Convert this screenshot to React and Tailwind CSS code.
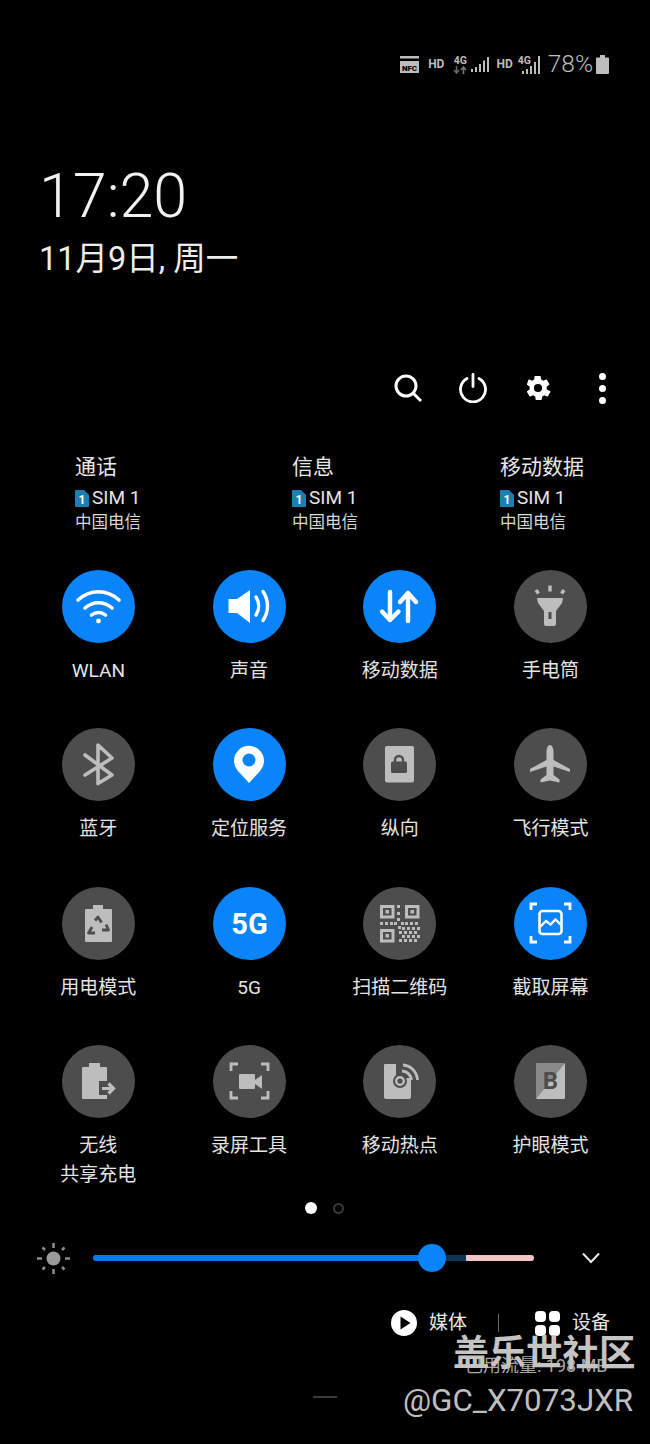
import React from "react"

const ON = "#0a84fb"
const OFF = "#4d4d4d"
const ICON = "#bdbdbd"

function SimRow({ title, width }) {
  return (
    <div className={width}>
      <div className="text-[21px] leading-[24px] text-[#e8e8e8]">{title}</div>
      <div className="flex items-center mt-[7px] h-[24px]">
        <svg width="14" height="17" viewBox="0 0 14 17">
          <path d="M1 0h8l5 5v11a1 1 0 0 1-1 1H1a1 1 0 0 1-1-1V1a1 1 0 0 1 1-1z" fill="#1b7fb4" />
          <text x="7" y="13.500" textAnchor="middle" fontSize="12" fontWeight="700" fill="#fff" fontFamily="Roboto">1</text>
        </svg>
        <span className="ml-[3px] text-[19px] text-[#e4e4e4]">SIM 1</span>
      </div>
      <div className="text-[16.500px] leading-[22px] mt-[2px] text-[#d8d8d8]">中国电信</div>
    </div>
  )
}

function Wifi() {
  return (
    <g fill="none" stroke="#fff" strokeWidth="3.600" strokeLinecap="round">
      <path d="M16 30c12-11 29-11 41 0" />
      <path d="M23 38c8-7 19-7 27 0" />
      <path d="M29.500 45c4-3.400 10-3.400 14 0" />
      <circle cx="36.500" cy="51" r="2.400" fill="#fff" stroke="none" />
    </g>
  )
}

function Sound() {
  return (
    <g>
      <path d="M15.500 29H24l13-9v33l-13-10h-8.500z" fill="#fff" />
      <g fill="none" stroke="#fff" strokeWidth="3.400" strokeLinecap="round">
        <path d="M43 27c3.500 5.500 3.500 12.500 0 18" />
        <path d="M50 21.500c6 9 6 20 0 29" />
      </g>
    </g>
  )
}

function Data() {
  return (
    <g fill="none" stroke="#fff" strokeWidth="4.400" strokeLinecap="round" strokeLinejoin="round">
      <path d="M27 22v28M19 41.500l8 8.500 8.500-8.500" />
      <path d="M45 23v28M37 32l8-9 8 9" />
    </g>
  )
}

function Torch() {
  return (
    <g>
      <path d="M23 28h26l-1 5-6 8v13a2 2 0 0 1-2 2h-8a2 2 0 0 1-2-2V41l-6-8z" fill={ICON} />
      <rect x="34.500" y="42" width="3" height="7" fill={OFF} />
      <g stroke={ICON} strokeWidth="3.500">
        <path d="M36 15.500v6" />
        <path d="M22 20l2.500 3.500" />
        <path d="M50 20l-2.500 3.500" />
      </g>
    </g>
  )
}

function Bluetooth() {
  return <path d="M23 27l27 20-14 8.500V17l14 13-27 17" fill="none" stroke={ICON} strokeWidth="3.600" strokeLinejoin="round" strokeLinecap="round" />
}

function Pin() {
  return (
    <g>
      <path d="M36 55L24.500 42.500a15 15 0 1 1 23 0z" fill="#fff" />
      <circle cx="36" cy="32" r="6.500" fill={ON} />
    </g>
  )
}

function Portrait() {
  return (
    <g>
      <rect x="22" y="18" width="29" height="36.500" rx="2" fill={ICON} />
      <rect x="28" y="33.500" width="16" height="11.500" rx="1.500" fill={OFF} />
      <path d="M32 34v-2a4 4 0 0 1 8 0v2" fill="none" stroke={OFF} strokeWidth="2.400" />
    </g>
  )
}

function Plane() {
  return <path d="M36 17c2 0 3.500 3 3.500 7v8L56 41v3l-16.500-5.500V47l6 4.500v3L36 52.500l-9.500 2v-3l6-4.500v-8.500L16 44v-3l16.500-9v-8c0-4 1.500-7 3.500-7z" fill={ICON} />
}

function PowerMode() {
  return (
    <g>
      <path d="M31 18h10v4h8a1 1 0 0 1 1 1v31a1 1 0 0 1-1 1H24a1 1 0 0 1-1-1V23a1 1 0 0 1 1-1h7z" fill={ICON} />
      <g fill="none" stroke={OFF} strokeWidth="2.800" strokeLinejoin="round">
        <path d="M33 33.500l3-3.500 3.500 5.500" />
        <path d="M44 37.500l2.500 5.500H40" />
        <path d="M33 46h-6.500l3.500-6" />
      </g>
    </g>
  )
}

function Finder({ x, y }) {
  return (
    <g>
      <rect x={x + 1.500} y={y + 1.500} width="11.500" height="10.500" fill="none" stroke={ICON} strokeWidth="3" />
      <rect x={x + 5.500} y={y + 5} width="3.500" height="3.500" fill={ICON} />
    </g>
  )
}

const QR_DOTS = [
  [34, 18], [34, 25], [34, 31], [31, 35], [38, 35], [17, 35], [22, 35], [27, 35],
  [35, 39], [42, 35], [47, 35], [52, 35], [39, 40], [44, 40], [49, 40], [54, 40],
  [36, 44], [41, 44], [46, 44], [51, 44], [39, 48], [44, 48], [49, 48], [54, 48],
  [36, 52], [41, 52], [46, 52], [51, 52],
]

function Qr() {
  return (
    <g>
      <Finder x={17} y={18} />
      <Finder x={42} y={18} />
      <Finder x={17} y={42} />
      {QR_DOTS.map(([x, y]) => (
        <rect key={`${x}-${y}`} x={x} y={y} width="3" height="3" fill={ICON} />
      ))}
    </g>
  )
}

function Corners({ l, t, r, b, color, size }) {
  return (
    <path
      d={`M${l} ${t + size}V${t}H${l + size} M${r - size} ${t}H${r}V${t + size} M${l} ${b - size}V${b}H${l + size} M${r - size} ${b}H${r}V${b - size}`}
      fill="none"
      stroke={color}
      strokeWidth="2.800"
    />
  )
}

function Capture() {
  return (
    <g>
      <Corners l={17} t={17} r={56} b={55} color="#fff" size={6} />
      <rect x="25.500" y="24" width="22" height="23" rx="3" fill="none" stroke="#fff" strokeWidth="2.600" />
      <path d="M26 40l6-6 4.500 3.500 5-5 5 5" fill="none" stroke="#fff" strokeWidth="2.400" />
    </g>
  )
}

function Share() {
  return (
    <g>
      <path d="M27 18h11v4h6a1 1 0 0 1 1 1v31H21a1 1 0 0 1-1-1V23a1 1 0 0 1 1-1h6z" fill={ICON} />
      <path d="M37 36h9v14h-9z" fill={OFF} />
      <path d="M40 43.500h9M46.500 38.500l5 5-5 5" fill="none" stroke={ICON} strokeWidth="3.200" />
    </g>
  )
}

function Record() {
  return (
    <g>
      <Corners l={18} t={19} r={55} b={53} color={ICON} size={7} />
      <rect x="26" y="29" width="16" height="15" rx="1" fill={ICON} />
      <path d="M42 35l7-5v14l-7-5z" fill={ICON} />
    </g>
  )
}

function Hotspot() {
  return (
    <g>
      <path d="M22 19h11v14h15v19a2 2 0 0 1-2 2H23a2 2 0 0 1-2-2V20a1 1 0 0 1 1-1z" fill={ICON} />
      <circle cx="37" cy="36" r="7" fill={OFF} />
      <circle cx="37" cy="36" r="3.800" fill="none" stroke={ICON} strokeWidth="2.400" />
      <g fill="none" stroke={ICON} strokeWidth="2.800">
        <path d="M39 26c5 0 9 4 9.500 9" />
        <path d="M40 20c8 .500 14 7 14.500 15" />
      </g>
    </g>
  )
}

function EyeMode() {
  return (
    <g>
      <rect x="22" y="18" width="29" height="36" rx="1.500" fill={ICON} />
      <path d="M22 54V19.500a1.500 1.500 0 0 1 1.500-1.500H51z" fill="#8a8a8a" />
      <text x="36.500" y="44" textAnchor="middle" fontSize="24" fontWeight="700" fill={OFF} fontFamily="Roboto">B</text>
    </g>
  )
}

function FiveG() {
  return <text x="36.500" y="47" textAnchor="middle" fontSize="29" fontWeight="700" fill="#fff" fontFamily="Roboto">5G</text>
}

const tiles = [
  { label: "WLAN", on: true, Icon: Wifi },
  { label: "声音", on: true, Icon: Sound },
  { label: "移动数据", on: true, Icon: Data },
  { label: "手电筒", Icon: Torch },
  { label: "蓝牙", Icon: Bluetooth },
  { label: "定位服务", on: true, Icon: Pin },
  { label: "纵向", Icon: Portrait },
  { label: "飞行模式", Icon: Plane },
  { label: "用电模式", Icon: PowerMode },
  { label: "5G", on: true, Icon: FiveG },
  { label: "扫描二维码", Icon: Qr },
  { label: "截取屏幕", on: true, Icon: Capture },
  { label: "无线", sub: "共享充电", Icon: Share },
  { label: "录屏工具", Icon: Record },
  { label: "移动热点", Icon: Hotspot },
  { label: "护眼模式", Icon: EyeMode },
]

function Tile({ label, sub, on, Icon }) {
  return (
    <div className="flex flex-col items-center h-[158.300px]">
      <div className={`w-[73px] h-[73px] rounded-full ${on ? "bg-[#0a84fb]" : "bg-[#4d4d4d]"}`}>
        <svg width="73" height="73" viewBox="0 0 73 73">
          <Icon />
        </svg>
      </div>
      <div className="mt-[16px] text-[19px] leading-[24px] text-[#e4e4e4] whitespace-nowrap">{label}</div>
      {sub && <div className="mt-[5px] text-[19px] leading-[24px] text-[#e4e4e4] whitespace-nowrap">{sub}</div>}
    </div>
  )
}

function StatusBar() {
  return (
    <div className="flex justify-end items-center h-[26px] mt-[51px] pr-[41px] text-[#bdbdbd]">
      <svg width="19" height="17" viewBox="0 0 19 17">
        <rect x="0" y="0" width="19" height="2.500" fill="#bdbdbd" />
        <rect x="0" y="5" width="19" height="12" fill="#bdbdbd" />
        <text x="9.500" y="14.500" textAnchor="middle" fontSize="8" fontWeight="900" fill="#000" fontFamily="Roboto">NFC</text>
      </svg>
      <span className="ml-[9px] text-[12px] font-bold">HD</span>
      <div className="ml-[9px] w-[14px] flex flex-col items-center">
        <span className="text-[10.500px] leading-[11px] font-bold">4G</span>
        <svg width="14" height="8" viewBox="0 0 14 8">
          <path d="M3.500 0v6M1 4l2.500 3L6 4" fill="none" stroke="#666" strokeWidth="1.600" />
          <path d="M10.500 8V2M8 4l2.500-3L13 4" fill="none" stroke="#777" strokeWidth="1.600" />
        </svg>
      </div>
      <svg className="ml-[4px]" width="19" height="17" viewBox="0 0 19 17">
        <path d="M1 13v3M5 11v5M9 8v8M13 4.500V16M17 1v15" stroke="#bdbdbd" strokeWidth="2" />
      </svg>
      <span className="ml-[6px] text-[12px] font-bold">HD</span>
      <div className="relative ml-[5px] w-[23px] h-[19px]">
        <span className="absolute left-0 top-0 text-[10.500px] leading-[11px] font-bold">4G</span>
        <svg className="absolute left-0 top-0" width="23" height="19" viewBox="0 0 23 19">
          <path d="M5 16v3M9 14v5M13 11v8M17 7v12M21 1v18" stroke="#bdbdbd" strokeWidth="2" />
        </svg>
      </div>
      <span className="ml-[7px] text-[24.500px] font-light leading-[26px]">78%</span>
      <svg className="ml-[3px]" width="13" height="19" viewBox="0 0 13 19">
        <path d="M4 0h5v2.500h3a1 1 0 0 1 1 1V18a1 1 0 0 1-1 1H1a1 1 0 0 1-1-1V3.500a1 1 0 0 1 1-1h3z" fill="#bdbdbd" />
      </svg>
    </div>
  )
}

function Toolbar() {
  return (
    <div className="flex justify-end pr-[15px] mt-[92px] h-[34px] text-white">
      <div className="w-[65px] flex justify-center items-center">
        <svg width="30" height="30" viewBox="0 0 30 30" fill="none" stroke="#fff" strokeWidth="3">
          <circle cx="13" cy="13" r="10" />
          <path d="M20 20l8 8" />
        </svg>
      </div>
      <div className="w-[65px] flex justify-center items-center">
        <svg width="30" height="30" viewBox="0 0 30 30" fill="none" stroke="#fff" strokeWidth="2.800" strokeLinecap="round">
          <path d="M15 1.500v12" />
          <path d="M9 5.500a12.500 12.500 0 1 0 12 0" />
        </svg>
      </div>
      <div className="w-[65px] flex justify-center items-center">
        <svg width="28" height="28" viewBox="0 0 24 24">
          <path
            fillRule="evenodd"
            fill="#fff"
            d="M19.400 13c.1-.3.100-.7.100-1s0-.7-.1-1l2.200-1.700c.2-.2.300-.4.100-.7l-2.100-3.600c-.1-.2-.4-.3-.6-.2l-2.600 1c-.5-.4-1.100-.7-1.700-1l-.4-2.700c0-.3-.2-.4-.5-.4h-4.200c-.3 0-.5.100-.5.400l-.4 2.700c-.6.300-1.200.6-1.700 1l-2.600-1c-.2-.1-.5 0-.6.200L2.600 8.600c-.2.300-.1.500.1.700L4.900 11c-.1.300-.1.700-.1 1s0 .7.100 1l-2.200 1.700c-.2.200-.3.400-.1.700l2.100 3.600c.1.200.4.300.6.200l2.600-1c.5.400 1.100.7 1.700 1l.4 2.700c0 .3.200.4.500.4h4.200c.3 0 .5-.1.500-.4l.4-2.700c.6-.3 1.200-.6 1.700-1l2.600 1c.2.100.5 0 .6-.2l2.100-3.600c.2-.3.100-.5-.1-.7zM12 15.500a3.500 3.500 0 1 1 0-7 3.500 3.500 0 0 1 0 7z"
          />
        </svg>
      </div>
      <div className="w-[65px] flex flex-col justify-center items-center gap-[5px]">
        <span className="w-[7px] h-[7px] rounded-full bg-white" />
        <span className="w-[7px] h-[7px] rounded-full bg-white" />
        <span className="w-[7px] h-[7px] rounded-full bg-white" />
      </div>
    </div>
  )
}

function Brightness() {
  return (
    <div className="flex items-center h-[30px] mt-[29px] pl-[36px]">
      <svg width="35" height="35" viewBox="0 0 35 35">
        <circle cx="17.500" cy="17.500" r="7" fill="#9a9a9a" />
        <g stroke="#8a8a8a" strokeWidth="2.600">
          <path d="M17.500 2v5M17.500 28v5M1 17.500h5M29 17.500h5M6.500 6.500l2.500 2.500M26 26l2.500 2.500M6.500 28.500L9 26M26 9l2.500-2.500" />
        </g>
      </svg>
      <div className="relative ml-[22px] w-[441px] h-[6px] rounded-full bg-[#0a3555]">
        <div className="absolute left-0 top-0 h-[6px] w-[339px] rounded-l-full bg-[#0a78ea]" />
        <div className="absolute right-0 top-0 h-[6px] w-[68px] rounded-r-full bg-[#f2c5c3]" />
        <div className="absolute left-[325px] top-[-11px] w-[28px] h-[28px] rounded-full bg-[#0a84fb]" />
      </div>
      <svg className="ml-[47px]" width="20" height="12" viewBox="0 0 20 12" fill="none" stroke="#e8e8e8" strokeWidth="2">
        <path d="M2 1.500l8 8.500 8-8.500" />
      </svg>
    </div>
  )
}

function MediaRow() {
  return (
    <div className="flex items-center h-[30px] mt-[35px] pl-[391px] text-[#e8e8e8]">
      <svg width="26" height="26" viewBox="0 0 26 26">
        <circle cx="13" cy="13" r="13" fill="#fff" />
        <path d="M9.500 6.500l10 6.500-10 6.500z" fill="#000" />
      </svg>
      <span className="ml-[12px] text-[19px] leading-[26px]">媒体</span>
      <span className="ml-[31px] w-[1px] h-[18px] bg-[#666]" />
      <div className="ml-[36px] grid grid-cols-2 gap-[3px]">
        <span className="w-[11px] h-[11px] rounded-[4px] bg-white" />
        <span className="w-[11px] h-[11px] rounded-[4px] bg-white" />
        <span className="w-[11px] h-[11px] rounded-[4px] bg-white" />
        <span className="w-[11px] h-[11px] rounded-[4px] bg-white" />
      </div>
      <span className="ml-[12px] text-[19px] leading-[26px]">设备</span>
    </div>
  )
}

export default function App() {
  return (
    <div className="relative w-[650px] h-[1444px] overflow-hidden bg-black text-white font-['Roboto','Noto_Sans_CJK_SC',sans-serif]">
      <StatusBar />

      <div className="pl-[39px] mt-[82px]">
        <div className="text-[61px] leading-[74px] font-light text-[#f2f2f2]">17:20</div>
        <div className="text-[32.500px] leading-[40px] mt-[6px] text-[#ededed]">11月9日, 周一</div>
      </div>

      <Toolbar />

      <div className="flex pl-[75px] mt-[50px]">
        <SimRow title="通话" width="w-[217px]" />
        <SimRow title="信息" width="w-[208px]" />
        <SimRow title="移动数据" width="w-[120px]" />
      </div>

      <div className="grid grid-cols-4 w-[603px] ml-[23px] mt-[36px]">
        {tiles.map((t) => (
          <Tile key={t.label} {...t} />
        ))}
      </div>

      <div className="flex justify-center items-center gap-[16px] mt-[-1px] pr-[2px]">
        <span className="w-[12px] h-[12px] rounded-full bg-white" />
        <span className="w-[11px] h-[11px] rounded-full border-2 border-[#3a3a3a]" />
      </div>

      <Brightness />
      <MediaRow />

      {/* data usage line and the forum watermark sit over the bottom of the panel */}
      <div className="absolute left-[465px] top-[1354px] text-[18px] leading-[24px] text-[#a8a8a8] whitespace-nowrap">已用流量: 198 MB</div>
      <div className="absolute left-[453px] top-[1332px] text-[36.500px] leading-[44px] font-bold text-[#c4c4c4] whitespace-nowrap">盖乐世社区</div>
      <div className="absolute left-[313px] top-[1396px] w-[24px] h-[2px] bg-[#3a3a3a]" />
      <div className="absolute left-[403px] top-[1382px] text-[31.300px] leading-[38px] text-[#bfbfbf] whitespace-nowrap">@GC_X7073JXR</div>
    </div>
  )
}
